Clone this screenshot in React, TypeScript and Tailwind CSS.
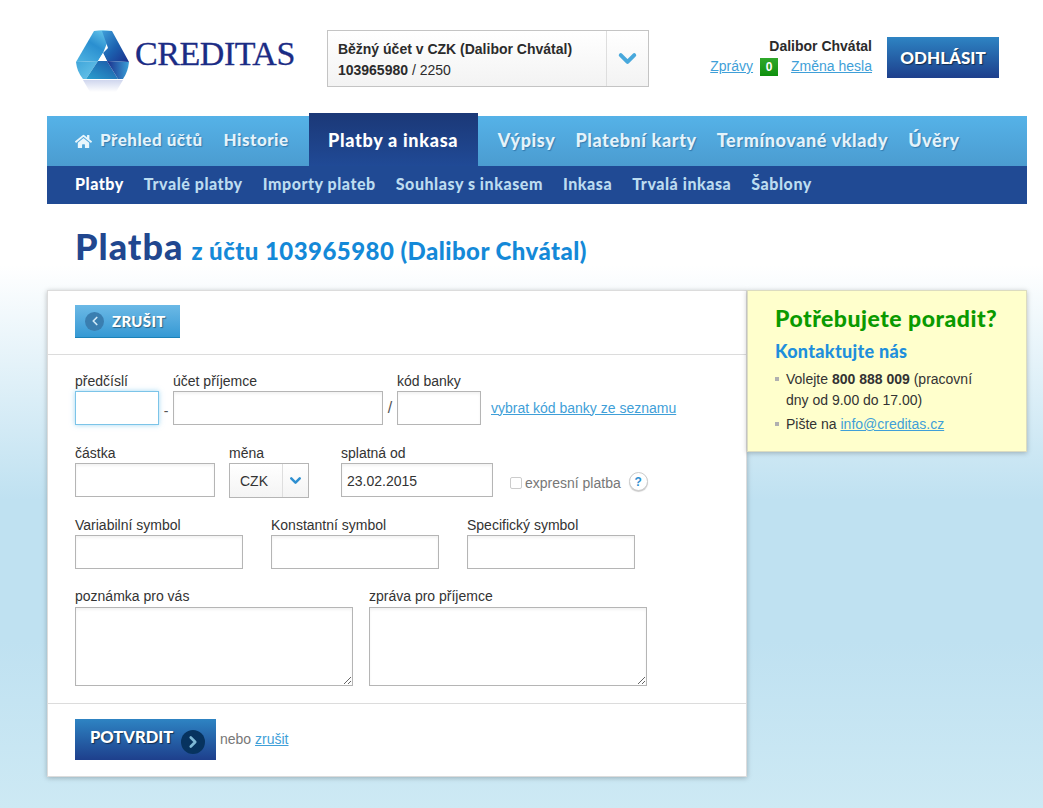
import { ChevronDown, ChevronLeft, ChevronRight } from "lucide-react";
import { FaHome } from "react-icons/fa";

const heavy = "font-['Lato',sans-serif] font-black";
const inputBase = "block h-[34px] border bg-white outline-none";
const inputCls = `${inputBase} border-[#b5b5b5] shadow-[inset_0_2px_3px_rgba(0,0,0,0.05)]`;
const linkCls = "text-[#3f9fd8] underline";

function Logo() {
  return (
    <div className="flex items-start">
      <svg width="54" height="64" viewBox="0 0 54 64" className="mt-[30px] ml-[29px]">
        <defs>
          <linearGradient id="lt" x1="0" y1="1" x2="0.7" y2="0">
            <stop offset="0" stopColor="#4fb4e2" />
            <stop offset="0.6" stopColor="#2a8fd0" />
            <stop offset="1" stopColor="#5fc0e8" />
          </linearGradient>
          <linearGradient id="rt" x1="0" y1="0" x2="1" y2="1">
            <stop offset="0" stopColor="#3f9ed9" />
            <stop offset="0.5" stopColor="#1c62b0" />
            <stop offset="1" stopColor="#1b2f8c" />
          </linearGradient>
          <linearGradient id="bl" x1="0" y1="0" x2="1" y2="1">
            <stop offset="0" stopColor="#3fa5da" />
            <stop offset="1" stopColor="#6cc6ea" />
          </linearGradient>
          <linearGradient id="bm" x1="0" y1="1" x2="1" y2="0">
            <stop offset="0" stopColor="#2aa0cf" />
            <stop offset="1" stopColor="#1c55a6" />
          </linearGradient>
          <linearGradient id="br" x1="0" y1="0" x2="1" y2="0">
            <stop offset="0" stopColor="#1b2f8c" />
            <stop offset="1" stopColor="#3aa0d8" />
          </linearGradient>
          <linearGradient id="rf" x1="0" y1="0" x2="0" y2="1">
            <stop offset="0" stopColor="#cfd6ee" />
            <stop offset="1" stopColor="#ffffff" />
          </linearGradient>
        </defs>
        <path d="M18 1 Q27 -0.5 36 1 L27 23 L22 31 L0 32 Z" fill="url(#lt)" />
        <path d="M26 1 L36 1 L53 32 L31 31 L27 23 L32 18 Z" fill="url(#rt)" />
        <path d="M0 32 L22 31 L10 49 L7 49 Q1 42 0 32 Z" fill="url(#bl)" />
        <path d="M22 31 L31 31 L42 49 L10 49 Z" fill="url(#bm)" />
        <path d="M31 31 L53 32 Q52 42 47 49 L42 49 Z" fill="url(#br)" />
        <path d="M22 31 L31 31 L27 23 Z" fill="#ffffff" />
        <path d="M7 50 L47 50 L40 62 L14 62 Z" fill="url(#rf)" />
      </svg>
      <span className="mt-[33px] ml-[5px] font-['Liberation_Serif',serif] text-[34px] leading-[42px] tracking-[-0.45px] text-[#1b2c85] [-webkit-text-stroke:0.3px_#1b2c85]">CREDITAS</span>
    </div>
  );
}

function AccountSelect() {
  return (
    <div className="mt-[30px] ml-[32px] flex h-[57px] w-[322px] border border-[#c4c4c4] bg-gradient-to-b from-white to-[#f3f3f3]">
      <div className="flex-1 pl-[10px] pt-[8px] text-[14px] leading-[21px] text-[#2b2b2b]">
        <p className="font-bold">Běžný účet v CZK (Dalibor Chvátal)</p>
        <p><span className="font-bold">103965980</span> / 2250</p>
      </div>
      <div className="flex w-[42px] items-center justify-center border-l border-[#dedede]">
        <ChevronDown size={27} strokeWidth={3.5} className="text-[#48a8dc]" />
      </div>
    </div>
  );
}

function UserBox() {
  return (
    <div className="mt-[37px] mr-[28px] ml-auto flex">
      <div className="flex flex-col items-end text-[14px]">
        <p className="text-[14px] leading-[18px] font-bold text-[#2b2b2b]">Dalibor Chvátal</p>
        <div className="mt-[1px] flex items-center">
          <a className={linkCls}>Zprávy</a>
          <span className="ml-[7px] flex h-[18px] w-[18px] items-center justify-center bg-gradient-to-b from-[#2fa82a] to-[#0c900c] text-[12px] font-bold text-white">0</span>
          <a className={`${linkCls} ml-[13px]`}>Změna hesla</a>
        </div>
      </div>
      <button className={`${heavy} ml-[15px] h-[41px] w-[112px] bg-gradient-to-b from-[#2e84c3] to-[#1e3f8c] text-[17px] text-white [text-shadow:1px_1px_1px_rgba(0,0,0,0.5)]`}>ODHLÁSIT</button>
    </div>
  );
}

function MainNav() {
  const after = ["Výpisy", "Platební karty", "Termínované vklady", "Úvěry"];
  const shadow = "text-[#e4f3fb] [text-shadow:1px_1px_1px_rgba(20,70,120,0.45)]";
  return (
    <div className="flex h-[53px] items-end">
      <div className="flex h-[50px] flex-1 items-center bg-gradient-to-b from-[#55b2e8] to-[#4b9cd0] pl-[28px]">
        <FaHome size={17} className="mr-[8px] text-[#e9f6fc]" />
        <span className={`${heavy} ${shadow} -mt-[2px] text-[17px] tracking-[0.5px]`}>Přehled účtů</span>
        <span className={`${heavy} ${shadow} -mt-[2px] ml-[21px] text-[17px] tracking-[0.5px]`}>Historie</span>
        <div className={`${heavy} mx-[20px] -mt-[3px] flex h-[53px] w-[169px] items-center justify-center bg-gradient-to-b from-[#1b3877] to-[#204a96] pt-[2px] text-[18px] tracking-[0.7px] text-white`}>
          Platby a inkasa
        </div>
        <div className="-mt-[2px] flex gap-[20px]">
          {after.map((item) => (
            <span key={item} className={`${heavy} ${shadow} text-[18px] tracking-[0.6px]`}>{item}</span>
          ))}
        </div>
      </div>
    </div>
  );
}

function SubNav() {
  const items = ["Trvalé platby", "Importy plateb", "Souhlasy s inkasem", "Inkasa", "Trvalá inkasa", "Šablony"];
  return (
    <div className={`${heavy} flex h-[38px] items-center gap-[20px] bg-[#204a94] pb-[2px] pl-[28px] text-[16px] tracking-[0.54px] text-[#bcdcf0]`}>
      <span className="text-white">Platby</span>
      {items.map((item) => (
        <span key={item}>{item}</span>
      ))}
    </div>
  );
}

function Field({ label, className, children }: { label: string; className?: string; children: React.ReactNode }) {
  return (
    <div className={className}>
      <label className="block h-[17px] text-[14px] leading-[15px] text-[#333]">{label}</label>
      {children}
    </div>
  );
}

function PaymentForm() {
  return (
    <div className="w-[700px] border border-[#dcdcdc] bg-white shadow-[0_1px_5px_rgba(0,0,0,0.25)]">
      <div className="h-[64px] border-b border-[#dcdcdc] pt-[14px] pl-[27px]">
        <button className={`${heavy} flex h-[33px] w-[105px] items-center bg-gradient-to-b from-[#6bb9e6] to-[#3499d4] border-b border-[#1b82b8] pl-[10px] text-[15px] tracking-[0.3px] text-white [text-shadow:1px_1px_1px_rgba(0,0,0,0.4)]`}>
          <span className="mr-[8px] flex h-[19px] w-[19px] items-center justify-center rounded-full bg-[#3a7eb0]">
            <ChevronLeft size={14} strokeWidth={3} className="text-[#cfe8f6]" />
          </span>
          ZRUŠIT
        </button>
      </div>

      <div className="h-[348px] pt-[19px] pl-[27px]">
        <div className="flex items-end">
          <Field label="předčíslí">
            <input className={`${inputBase} w-[84px] border-[#7cc4e8] shadow-[0_0_5px_rgba(100,190,235,0.6)]`} />
          </Field>
          <span className="flex h-[34px] w-[14px] items-center justify-center pt-[6px] text-[14px] text-[#555]">-</span>
          <Field label="účet příjemce">
            <input className={`${inputCls} w-[210px]`} />
          </Field>
          <span className="flex h-[34px] w-[14px] items-center justify-center text-[16px] text-[#555]">/</span>
          <Field label="kód banky">
            <input className={`${inputCls} w-[84px]`} />
          </Field>
          <a className={`${linkCls} ml-[10px] flex h-[34px] items-center text-[14px]`}>vybrat kód banky ze seznamu</a>
        </div>

        <div className="mt-[21px] flex items-start">
          <Field label="částka">
            <input className={`${inputCls} w-[140px]`} />
          </Field>
          <Field label="měna" className="ml-[14px]">
            <div className="flex h-[35px] w-[80px] border border-[#b5b5b5] bg-gradient-to-b from-white to-[#f4f4f4]">
              <span className="flex w-[52px] items-center pl-[10px] pt-[2px] text-[14px] text-[#333]">CZK</span>
              <span className="flex flex-1 items-center justify-center border-l border-[#dedede]">
                <ChevronDown size={17} strokeWidth={3.5} className="text-[#2e8fd0]" />
              </span>
            </div>
          </Field>
          <Field label="splatná od" className="ml-[32px]">
            <input defaultValue="23.02.2015" className={`${inputCls} w-[152px] px-[5px] pt-[1px] text-[14px] text-[#333]`} />
          </Field>
          <div className="ml-[17px] mt-[23px] flex h-[28px] items-center text-[14px] text-[#777]">
            <span className="mr-[3px] h-[12px] w-[12px] rounded-[2px] border border-[#ccc] bg-white" />
            expresní platba
            <span className="ml-[8px] -mt-[3px] flex h-[19px] w-[19px] items-center justify-center rounded-full border border-[#ccc] bg-white text-[12px] font-bold text-[#2e8fd0] shadow-[0_1px_1px_rgba(0,0,0,0.2)]">?</span>
          </div>
        </div>

        <div className="mt-[20px] flex gap-[28px]">
          <Field label="Variabilní symbol"><input className={`${inputCls} w-[168px]`} /></Field>
          <Field label="Konstantní symbol"><input className={`${inputCls} w-[168px]`} /></Field>
          <Field label="Specifický symbol"><input className={`${inputCls} w-[168px]`} /></Field>
        </div>

        <div className="mt-[20px] flex gap-[16px]">
          <Field label="poznámka pro vás">
            <textarea className={`${inputCls} mt-[1px] !h-[79px] w-[278px]`} />
          </Field>
          <Field label="zpráva pro příjemce">
            <textarea className={`${inputCls} mt-[1px] !h-[79px] w-[278px]`} />
          </Field>
        </div>
      </div>

      <div className="flex h-[73px] items-start border-t border-[#dcdcdc] pt-[15px] pl-[27px]">
        <button className={`${heavy} flex h-[41px] w-[141px] bg-gradient-to-b from-[#2e84c3] to-[#1e3f8c] pl-[15px] pt-[8px] text-[16.5px] text-white [text-shadow:1px_1px_1px_rgba(0,0,0,0.5)]`}>
          <span className="leading-[20px]">POTVRDIT</span>
          <span className="mt-[3px] ml-[8px] flex h-[24px] w-[24px] items-center justify-center rounded-full bg-[#07335f]">
            <ChevronRight size={18} strokeWidth={3.5} className="text-[#7fb9d6]" />
          </span>
        </button>
        <p className="ml-[4px] mt-[10px] text-[14px] text-[#777]">nebo <a className={linkCls}>zrušit</a></p>
      </div>
    </div>
  );
}

function HelpBox() {
  return (
    <div className="h-[162px] w-[280px] border border-[#dcdcc0] bg-[#ffffcc] pt-[13px] pl-[27px] shadow-[0_1px_5px_rgba(0,0,0,0.25)]">
      <h2 className={`${heavy} text-[23px] leading-[28px] tracking-[0.5px] text-[#0a9a00]`}>Potřebujete poradit?</h2>
      <h3 className={`${heavy} mt-[7px] text-[18px] leading-[24px] tracking-[0.3px] text-[#1f8fdc]`}>Kontaktujte nás</h3>
      <ul className="mt-[6px] text-[14px] leading-[21px] text-[#333]">
        <li className="flex">
          <span className="mt-[8px] mr-[7px] h-[4px] w-[4px] shrink-0 bg-[#b0b0b0]" />
          <span>Volejte <b>800 888 009</b> (pracovní<br />dny od 9.00 do 17.00)</span>
        </li>
        <li className="mt-[3px] flex">
          <span className="mt-[8px] mr-[7px] h-[4px] w-[4px] shrink-0 bg-[#b0b0b0]" />
          <span>Pište na <a className={linkCls}>info@creditas.cz</a></span>
        </li>
      </ul>
    </div>
  );
}

export default function App() {
  return (
    <div className="min-h-[808px] bg-[linear-gradient(to_bottom,#ffffff_0px,#ffffff_265px,#bfe1f1_500px,#bfe1f1_640px,#cde9f4_808px)] pl-[47px] font-['Liberation_Sans',Arial,sans-serif]">
      <div className="w-[980px]">
        <div className="flex h-[113px]">
          <Logo />
          <AccountSelect />
          <UserBox />
        </div>
        <MainNav />
        <SubNav />
        <h1 className="flex h-[86px] items-baseline pl-[28px] pt-[22px]">
          <span className={`${heavy} text-[36px] leading-[40px] tracking-[1px] text-[#21478f]`}>Platba</span>
          <span className={`${heavy} ml-[8px] text-[24px] tracking-[0.45px] text-[#1489d8]`}>z účtu 103965980 (Dalibor Chvátal)</span>
        </h1>
        <div className="flex items-start">
          <PaymentForm />
          <HelpBox />
        </div>
      </div>
    </div>
  );
}
